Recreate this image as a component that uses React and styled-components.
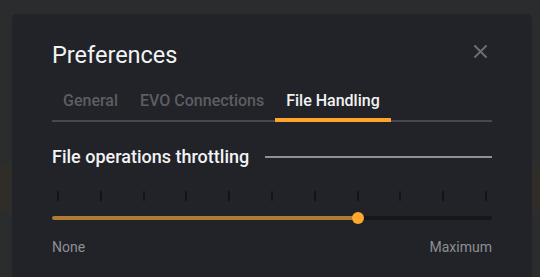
import React from "react";
import styled, { createGlobalStyle } from "styled-components";

const Global = createGlobalStyle`
  html, body { margin: 0; padding: 0; }
  body {
    width: 540px;
    height: 277px;
    overflow: hidden;
    font-family: Roboto, "Liberation Sans", sans-serif;
    background:
      linear-gradient(to bottom,
        #2b2c2e 0px, #2b2c2e 165px,
        #302c28 165px, #302c28 211px,
        #2b2c2e 211px, #2b2c2e 100%);
  }
`;

const Dialog = styled.div`
  box-sizing: border-box;
  margin: 14px 0 0 12px;
  width: 520px;
  height: 263px;
  background: #212328;
  border-radius: 5px 5px 0 0;
  padding: 27px 40px 0 40px;
  display: flex;
  flex-direction: column;
`;

const Header = styled.div`
  display: flex;
  justify-content: space-between;
  align-items: flex-start;
`;

const Title = styled.h1`
  margin: 0;
  font-size: 23.5px;
  line-height: 28px;
  font-weight: 400;
  color: #f2f3f4;
`;

const CloseButton = styled.button`
  border: 0;
  background: none;
  padding: 0;
  margin: 4px 5px 0 0;
  width: 13px;
  height: 13px;
  display: flex;
  cursor: pointer;
`;

const TabList = styled.div`
  display: flex;
  margin-top: 22px;
  border-bottom: 2px solid #46484c;
`;

const Tab = styled.div`
  position: relative;
  padding: 0 11px 11px;
  margin-bottom: -2px;
  font-size: 16px;
  line-height: 20px;
  font-weight: 500;
  color: ${(p) => (p.$active ? "#f1f2f3" : "#5b5e63")};
  &::after {
    content: "";
    position: absolute;
    left: 0;
    right: 0;
    bottom: 0;
    height: 4px;
    background: ${(p) => (p.$active ? "#ffa52d" : "transparent")};
  }
`;

const SectionHeader = styled.div`
  display: flex;
  align-items: center;
  gap: 16px;
  margin-top: 24px;
`;

const SectionTitle = styled.h2`
  margin: 0;
  font-size: 18px;
  line-height: 22px;
  font-weight: 500;
  color: #f2f3f4;
  white-space: nowrap;
`;

const Rule = styled.div`
  flex: 1;
  height: 2px;
  background: #8e9094;
`;

const Slider = styled.div`
  margin-top: 23px;
  display: flex;
  flex-direction: column;
`;

const Ticks = styled.div`
  display: flex;
  justify-content: space-between;
  padding: 0 5px;
`;

const Tick = styled.div`
  width: 2px;
  height: 10px;
  background: #131417;
`;

const Track = styled.div`
  position: relative;
  margin-top: 15px;
  height: 4px;
  border-radius: 2px;
  background: #16171a;
`;

const Fill = styled.div`
  position: absolute;
  left: 0;
  top: 0;
  bottom: 0;
  border-radius: 2px;
  background: #b07b33;
`;

const Thumb = styled.div`
  position: absolute;
  top: 50%;
  width: 12px;
  height: 12px;
  margin: -6px 0 0 -6px;
  border-radius: 50%;
  background: #ffa82f;
`;

const Labels = styled.div`
  display: flex;
  justify-content: space-between;
  margin-top: 19px;
  font-size: 14px;
  line-height: 16px;
  color: #8d8f93;
`;

export default function App() {
  const value = 7;
  const max = 10;
  const trackWidth = 440;
  const inset = 6;
  const pos = inset + ((trackWidth - 2 * inset) * value) / max;
  return (
    <>
      <Global />
      <Dialog>
        <Header>
          <Title>Preferences</Title>
          <CloseButton aria-label="Close">
            <svg width="13" height="13" viewBox="0 0 13 13">
              <path d="M1 1L12 12M12 1L1 12" stroke="#6a6d71" strokeWidth="2" strokeLinecap="square" />
            </svg>
          </CloseButton>
        </Header>
        <TabList>
          <Tab>General</Tab>
          <Tab>EVO Connections</Tab>
          <Tab $active>File Handling</Tab>
        </TabList>
        <SectionHeader>
          <SectionTitle>File operations throttling</SectionTitle>
          <Rule />
        </SectionHeader>
        <Slider>
          <Ticks>
            {Array.from({ length: max + 1 }).map((_, i) => (
              <Tick key={i} />
            ))}
          </Ticks>
          <Track>
            <Fill style={{ width: pos }} />
            <Thumb style={{ left: pos }} />
          </Track>
          <Labels>
            <span>None</span>
            <span>Maximum</span>
          </Labels>
        </Slider>
      </Dialog>
    </>
  );
}
